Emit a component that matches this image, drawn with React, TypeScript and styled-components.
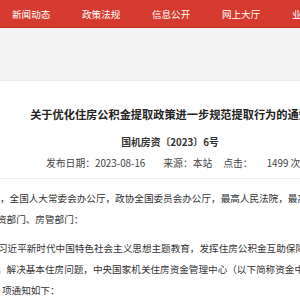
import React from 'react';
import styled, { createGlobalStyle } from 'styled-components';

const GlobalStyle = createGlobalStyle`
  html, body {
    margin: 0;
    padding: 0;
    background: #fff;
    overflow: hidden;
  }
  body {
    font-family: "Noto Sans CJK SC", "Noto Sans", sans-serif;
    color: #333;
  }
`;

const Page = styled.div`
  width: 300px;
  height: 300px;
  overflow: hidden;
`;

const NavBar = styled.nav`
  height: 27px;
  background: #d53a2f;
  border-bottom: 1px solid #c22f25;
  display: flex;
  align-items: center;
  gap: 31.6px;
  padding-left: 12px;
  white-space: nowrap;
`;

const NavItem = styled.span`
  color: #fff;
  font-size: 9.6px;
  line-height: 14px;
  flex-shrink: 0;
`;

const GrayBand = styled.div`
  height: 52px;
  background: #f3f3f3;
  border-bottom: 1px solid #ececec;
`;

const Article = styled.div`
  width: 340px;
  padding-top: 25px;
`;

const Title = styled.h1`
  margin: 0;
  font-size: 11.2px;
  line-height: 16px;
  font-weight: 700;
  color: #222;
  text-align: center;
  white-space: nowrap;
`;

const DocNo = styled.div`
  margin-top: 13px;
  font-size: 9.8px;
  line-height: 14px;
  font-weight: 700;
  color: #333;
  text-align: center;
  white-space: nowrap;
`;

const MetaRow = styled.div`
  margin-top: 7px;
  padding-left: 46px;
  padding-bottom: 8px;
  width: 300px;
  box-sizing: border-box;
  border-bottom: 1px solid #ebebeb;
  display: flex;
  font-size: 9.8px;
  line-height: 14px;
  color: #444;
  white-space: nowrap;
`;

const MetaItem = styled.span<{ $space?: number }>`
  margin-left: ${p => p.$space ?? 0}px;
  flex-shrink: 0;
`;

const Body = styled.div`
  width: 300px;
  padding-top: 9px;
  font-size: 9.6px;
  line-height: 21px;
  color: #333;
`;

const Paragraph = styled.p`
  margin: 0 0 8px;
`;

const Line = styled.div<{ $indent?: number }>`
  white-space: nowrap;
  overflow: hidden;
  text-indent: ${p => p.$indent ?? 0}px;
`;

const navItems = ['新闻动态', '政策法规', '信息公开', '网上大厅', '业务指南'];

export default function App() {
  return (
    <Page>
      <GlobalStyle />
      <NavBar>
        {navItems.map(item => (
          <NavItem key={item}>{item}</NavItem>
        ))}
      </NavBar>
      <GrayBand />
      <Article>
        <Title>关于优化住房公积金提取政策进一步规范提取行为的通知</Title>
        <DocNo>国机房资〔2023〕6号</DocNo>
      </Article>
      <MetaRow>
        <MetaItem>发布日期：2023-08-16</MetaItem>
        <MetaItem $space={18}>来源：本站</MetaItem>
        <MetaItem $space={11}>点击：</MetaItem>
        <MetaItem $space={14}>1499 次</MetaItem>
      </MetaRow>
      <Body>
        <Paragraph>
          <Line $indent={0}>，全国人大常委会办公厅，政协全国委员会办公厅，最高人民法院，最高人民检察院，</Line>
          <Line $indent={-3}>资部门、房管部门：</Line>
        </Paragraph>
        <Paragraph>
          <Line $indent={-2}>习近平新时代中国特色社会主义思想主题教育，发挥住房公积金互助保障作用，</Line>
          <Line $indent={-3}>，解决基本住房问题，中央国家机关住房资金管理中心（以下简称资金中心）</Line>
          <Line $indent={2}>项通知如下：</Line>
        </Paragraph>
      </Body>
    </Page>
  );
}
